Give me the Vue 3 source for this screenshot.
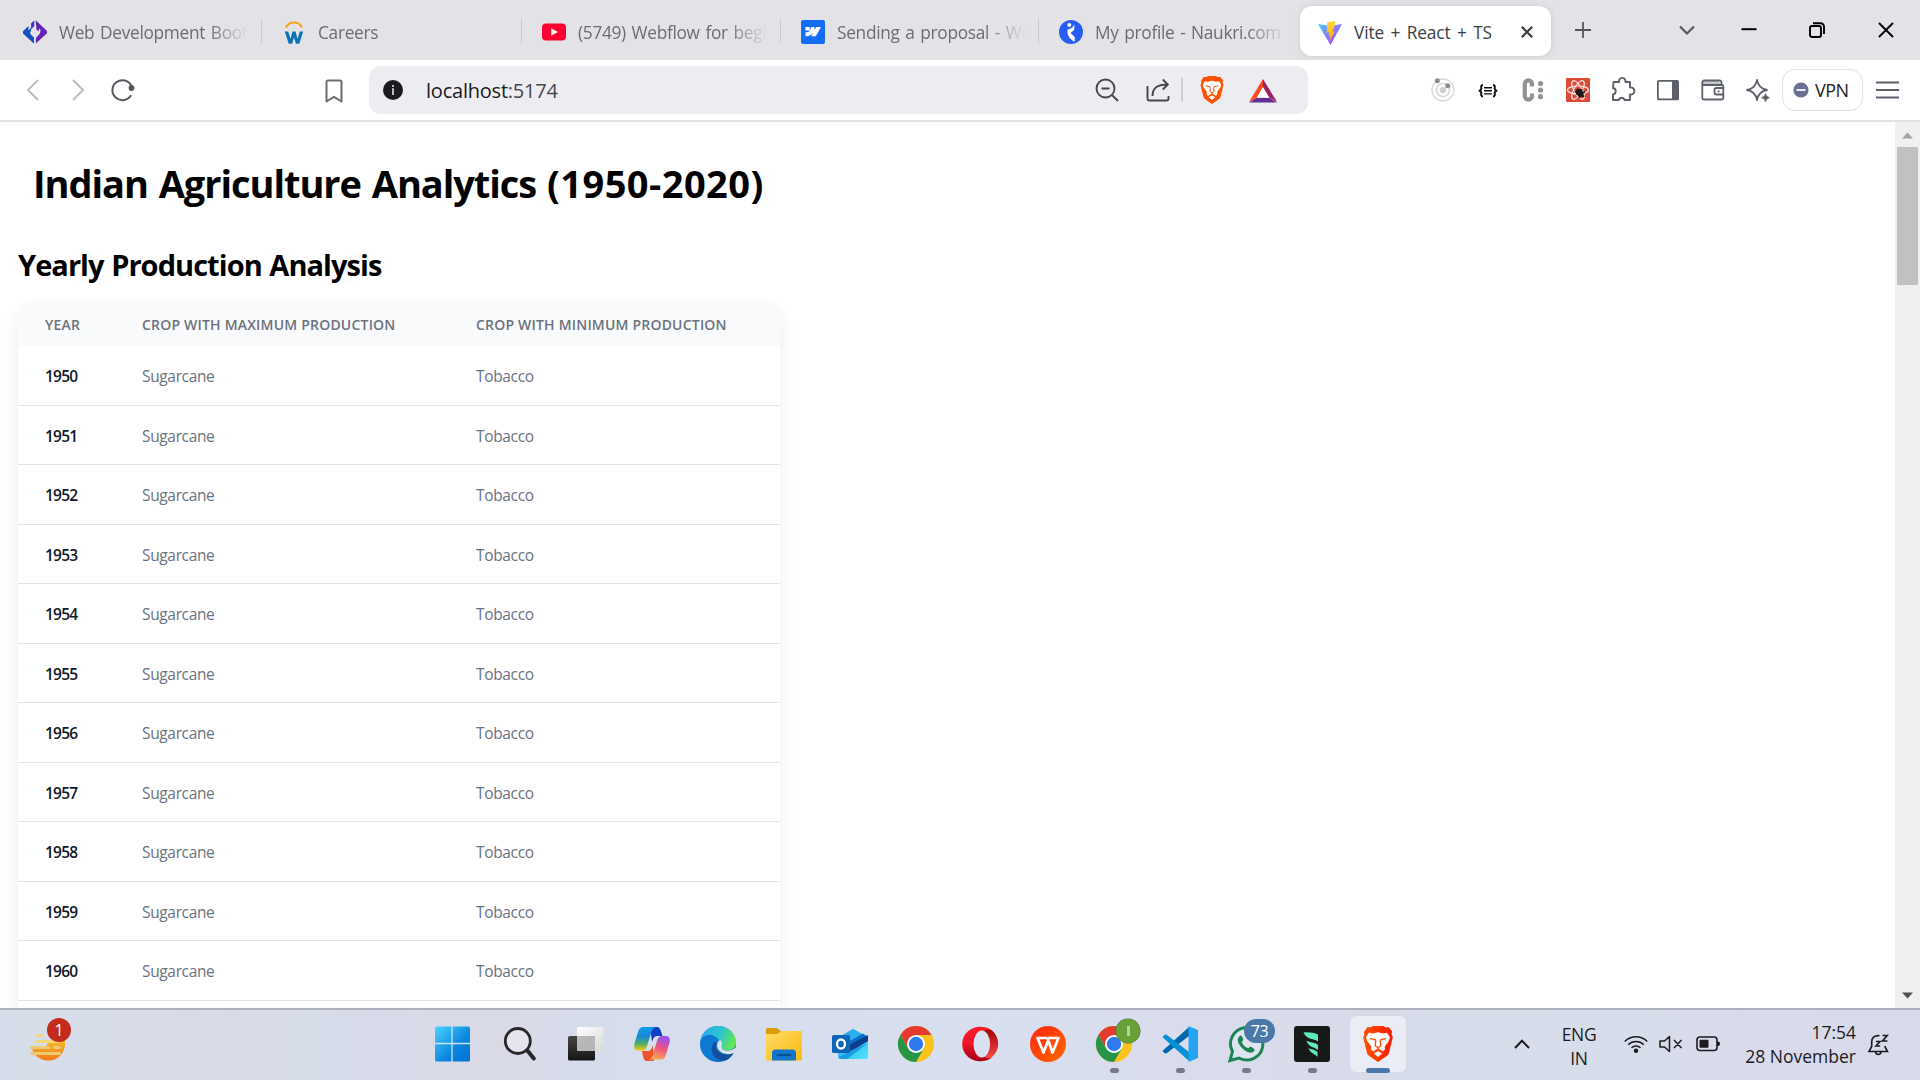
<script setup>
const tabs = [
  { icon: 'code', title: 'Web Development Bootcamp', width: 262 },
  { icon: 'careers', title: 'Careers', width: 260 },
  { icon: 'youtube', title: '(5749) Webflow for beginners', width: 259 },
  { icon: 'webflow', title: 'Sending a proposal - Webflow', width: 258 },
  { icon: 'naukri', title: 'My profile - Naukri.com', width: 261 },
]
const years = Array.from({ length: 11 }, (_, i) => 1950 + i)
const apps = [
  'windows', 'search', 'taskview', 'copilot', 'edge', 'files', 'outlook', 'chrome',
  'opera', 'wps', 'chrome2', 'vscode', 'whatsapp', 'leaf', 'brave',
]
const running = ['chrome2', 'vscode', 'whatsapp', 'leaf']
</script>

<template>
  <div class="screen">
    <svg width="0" height="0" class="defs">
      <defs>
        <linearGradient id="gVite" x1="0" y1="0" x2="1" y2="1"><stop offset="0" stop-color="#41d1ff" /><stop offset="0.9" stop-color="#bd34fe" /></linearGradient>
        <linearGradient id="gBolt" x1="0" y1="0" x2="0" y2="1"><stop offset="0" stop-color="#ffd83d" /><stop offset="1" stop-color="#ffa800" /></linearGradient>
        <linearGradient id="gWin" x1="0" y1="0" x2="1" y2="1"><stop offset="0" stop-color="#4ad4ff" /><stop offset="0.6" stop-color="#0a86de" /><stop offset="1" stop-color="#0070cf" /></linearGradient>
        <linearGradient id="gLion" x1="0" y1="0" x2="1" y2="0"><stop offset="0" stop-color="#ff5500" /><stop offset="1" stop-color="#ff1800" /></linearGradient>
        <linearGradient id="gSun" x1="0" y1="0" x2="0" y2="1"><stop offset="0" stop-color="#f3bd2e" /><stop offset="1" stop-color="#f07a14" /></linearGradient>
        <linearGradient id="gDark" x1="0" y1="0" x2="0" y2="1"><stop offset="0" stop-color="#484644" /><stop offset="1" stop-color="#151515" /></linearGradient>
        <linearGradient id="gLight" x1="0" y1="0" x2="1" y2="1"><stop offset="0" stop-color="#fff" /><stop offset="1" stop-color="#d9d9d9" /></linearGradient>
        <linearGradient id="gCopA" x1="0" y1="0" x2="0" y2="1"><stop offset="0" stop-color="#129bea" /><stop offset="0.4" stop-color="#1689d8" /><stop offset="0.72" stop-color="#4fb064" /><stop offset="1" stop-color="#fccb05" /></linearGradient>
        <linearGradient id="gCopB" x1="0.6" y1="0" x2="0.3" y2="1"><stop offset="0" stop-color="#9a4ff0" /><stop offset="0.5" stop-color="#f0567e" /><stop offset="1" stop-color="#ffaa55" /></linearGradient>
        <linearGradient id="gEdgeA" x1="0" y1="0.2" x2="1" y2="0.5"><stop offset="0" stop-color="#2da9ee" /><stop offset="0.55" stop-color="#2bc5cf" /><stop offset="1" stop-color="#66e750" /></linearGradient>
        <linearGradient id="gEdgeB" x1="0" y1="0" x2="1" y2="1"><stop offset="0" stop-color="#1273c4" /><stop offset="0.5" stop-color="#0c7cd7" /><stop offset="1" stop-color="#0c6bc6" /></linearGradient>
        <linearGradient id="gFile" x1="0" y1="0" x2="1" y2="1"><stop offset="0" stop-color="#ffda68" /><stop offset="1" stop-color="#fcb90d" /></linearGradient>
        <linearGradient id="gOperaA" x1="0" y1="0" x2="0" y2="1"><stop offset="0" stop-color="#ff1b2d" /><stop offset="0.5" stop-color="#ee1426" /><stop offset="1" stop-color="#a40014" /></linearGradient>
        <linearGradient id="gOperaB" x1="0" y1="0" x2="0" y2="1"><stop offset="0" stop-color="#9c0000" /><stop offset="1" stop-color="#ff4b4b" /></linearGradient>
        <linearGradient id="gWps" x1="0" y1="0" x2="1" y2="1"><stop offset="0" stop-color="#ff2410" /><stop offset="1" stop-color="#ff6a00" /></linearGradient>
        <linearGradient id="gOut" x1="0" y1="0" x2="1" y2="1"><stop offset="0" stop-color="#1aa0e2" /><stop offset="1" stop-color="#50e2ff" /></linearGradient>
        <g id="face">
          <path fill="#fff" d="M5 5.200 8 5.800 12 4.800l4 1 3-.6 2.300 3.600-.9 2.800-3.200 4.200.2 2.400-1.600 1.500-3.800-2.400-3.800 2.400-1.600-1.500.2-2.400-3.200-4.200-.9-2.800z" />
          <path fill="#fff" d="M12 19.300 8.800 21.300 12 24l3.200-2.700z" />
          <path fill="none" stroke="#ff4c00" stroke-width="1" d="M5.800 9.800l4 .8.500 1.500-.5 3.200 2.200 1.500 2.200-1.500-.5-3.200.5-1.500 4-.8M12 17v2.500" />
        </g>
        <g id="chromeLogo">
          <circle cx="18" cy="18" r="18" fill="#fcc21b" />
          <path fill="#e33b2e" d="M2.400 9A18 18 0 0 1 33.600 9H18L10.200 22.500z" />
          <path fill="#269547" d="M2.400 9A18 18 0 0 0 18 36l7.800-13.500L18 27l-7.800-4.500z" />
          <circle cx="18" cy="18" r="9" fill="#fff" /><circle cx="18" cy="18" r="7.200" fill="#2f7aee" />
        </g>
      </defs>
    </svg>

    <header class="tabstrip">
      <div v-for="t in tabs" :key="t.icon" class="tab" :class="t.icon" :style="{ width: t.width + 'px' }">
        <svg class="fav" viewBox="0 0 24 24">
          <g v-if="t.icon === 'code'">
            <path fill="#1250c4" d="M0 11.200 5.500 6v4.500L8 7.800v3.400L7 12l.8 2.500 3.200 3v6.200L0 13.600z" />
            <path fill="#3b3ac4" d="M8 3.500 11.300.4V6L8.200 9.500z" />
            <path fill="#6323b6" d="M12.700.2 24 11v2.300L12.900 23.600V18l4-4.500.7-3.500-1.500-1.500-.6 3-2-2z" />
          </g>
          <g v-else-if="t.icon === 'careers'">
            <path d="M4 7.500C7.200.8 16.800.8 20 7.500" fill="none" stroke="#f9a11b" stroke-width="2.200" />
            <path fill="#0e72b6" d="M2.800 11.500h3.400l2.300 7.200 2-7.200h3l2 7.200 2.300-7.200h3.400L17.300 23.700h-3.400L12 17.500l-1.900 6.200H6.700z" />
          </g>
          <g v-else-if="t.icon === 'youtube'"><rect y="3.500" width="24" height="17" rx="4" fill="#ff0033" /><path d="M9.300 8.300v7.400l6.500-3.700z" fill="#fff" /></g>
          <g v-else-if="t.icon === 'webflow'"><rect width="24" height="24" rx="2" fill="#146ef5" /><path fill="#fff" d="M20 7l-5.200 9.300h-4.600l2-3.600C10.500 15 8.200 16.100 4.500 16.300v-3.700c2.200-.1 3.500-.9 4.600-2H4.500V7h4.200v3L10.500 7h3v3L15.300 7z" /></g>
          <g v-else><circle cx="12" cy="12" r="12" fill="#275df5" /><circle cx="10.300" cy="5" r="2" fill="#fff" /><path fill="#fff" d="M15.300 4.500v5.200L11.500 13l4.300 4v4.500c-3.700-1.300-6.600-4.500-7.300-8.500V9.500c2.800-.3 5.500-2 6.800-5z" /></g>
        </svg>
        <span class="title">{{ t.title }}</span>
      </div>
      <div class="tab active">
        <svg class="fav" viewBox="0 0 24 24"><path fill="url(#gVite)" d="M0 3l12 2L24 3 12.500 24z" /><path fill="url(#gBolt)" d="M17.300.1 9.300 1.600 8.600 11.800l2.600-.5-.7 3.700 2-.6-1.200 5.700L17 10.500l-2.600.5 2-5z" /></svg>
        <span class="title">Vite + React + TS</span>
        <svg class="tabx" width="14" height="14" viewBox="0 0 14 14"><path d="M1.800 1.800l10.400 10.400M12.200 1.800 1.800 12.200" stroke="#3b3d44" stroke-width="2.200" /></svg>
      </div>
      <div class="winctl">
        <svg width="16" height="16" viewBox="0 0 16 16"><path d="M8 0v16M0 8h16" stroke="#55575e" stroke-width="1.800" /></svg>
        <svg class="down" width="16" height="16" viewBox="0 0 16 16"><path d="M1 4.500l7 7 7-7" fill="none" stroke="#55585f" stroke-width="2.200" /></svg>
        <svg class="min" width="16" height="16" viewBox="0 0 16 16"><path d="M.5 7.200h15" stroke="#000" stroke-width="2" /></svg>
        <svg class="max" width="16" height="16" viewBox="0 0 16 16"><rect x="1" y="4" width="11" height="11" rx="2" fill="none" stroke="#000" stroke-width="1.900" /><path d="M4 1.200h7.500a3.500 3.500 0 0 1 3.500 3.500V12" fill="none" stroke="#000" stroke-width="1.900" /></svg>
        <svg class="cls" width="16" height="16" viewBox="0 0 16 16"><path d="M1 1l14 14M15 1 1 15" stroke="#000" stroke-width="1.900" /></svg>
      </div>
    </header>

    <div class="toolbar">
      <svg class="back" width="12" height="22" viewBox="0 0 12 22"><path d="M11 1 1 11l10 10" fill="none" stroke="#bcbdc1" stroke-width="2" /></svg>
      <svg class="fwd" width="12" height="22" viewBox="0 0 12 22"><path d="M1 1l10 10L1 21" fill="none" stroke="#bcbdc1" stroke-width="2" /></svg>
      <svg class="reload" width="24" height="24" viewBox="0 0 24 24"><path d="M19.700 17.800A10 10 0 1 1 20.500 8" fill="none" stroke="#55585f" stroke-width="2" stroke-linecap="round" /><circle cx="20.500" cy="10" r="2.900" fill="#55585f" /></svg>
      <svg class="mark" width="18" height="24" viewBox="0 0 18 24"><path d="M3 1.500h12a1.500 1.500 0 0 1 1.500 1.500v19.500L9 17.800 1.500 22.500V3A1.500 1.500 0 0 1 3 1.500z" fill="none" stroke="#6b6d75" stroke-width="2" stroke-linejoin="round" /></svg>
      <div class="omnibox">
        <svg width="20" height="20" viewBox="0 0 20 20"><circle cx="10" cy="10" r="10" fill="#1b1a20" /><path d="M10 5v2M10 8.300V15" stroke="#d9d9df" stroke-width="1.700" /></svg>
        <span class="url">localhost<i>:5174</i></span>
        <svg class="zoomout" width="24" height="24" viewBox="0 0 24 24"><g fill="none" stroke="#45464f" stroke-width="1.900"><circle cx="10.500" cy="10.500" r="9" /><path d="M17 17l6 6M6.500 10.500h8" /></g></svg>
        <svg class="share" width="24" height="24" viewBox="0 0 24 24"><g fill="none" stroke="#45464f" stroke-width="1.900"><path d="M1.500 8v12.500a2 2 0 0 0 2 2h17a2 2 0 0 0 2-2V18" /><path d="M6.500 18C6.500 10 11 6.500 21.500 6.500M16.800 1.500l5 5-5 5" /></g></svg>
        <i class="sep"></i>
        <svg class="lion" width="24" height="28" viewBox="0 0 24 28"><path fill="#ff5000" d="M6.500 1 8 0h8l1.500 1h2.800L23 4.200l-.5 2 1 2.600-3 12.200a4 4 0 0 1-1.700 2.300L12 28l-6.800-4.700A4 4 0 0 1 3.500 21L.5 8.800l1-2-.5-2L3.700 1z" /><use href="#face" /></svg>
        <svg class="bat" width="28" height="25" viewBox="0 0 28 25"><path d="M14 1 0 24l8-4.500 6-10z" fill="#ff4724" /><path d="M14 1l14 23-8-4.500-6-10z" fill="#9e1f63" /><path d="M0 24.500h28l-8-5H8z" fill="#662d91" /><path d="M14 9l6.300 10.800H7.700z" fill="#fff" /></svg>
      </div>
      <div class="exts">
        <svg viewBox="0 0 24 24"><g fill="none" stroke="#d9d9d9"><circle cx="12" cy="12" r="11" stroke-width="1.300" /><circle cx="12" cy="12" r="6.500" stroke-width="1.700" /></g><circle cx="12" cy="12" r="3.200" fill="#cfcfcf" /><circle cx="6.300" cy="2.800" r="2.500" fill="#8b8b8b" /><circle cx="16.700" cy="7.800" r="2.500" fill="#8b8b8b" /></svg>
        <svg viewBox="0 0 24 24"><g fill="none" stroke="#111" stroke-width="2"><path d="M7 7C4.500 7 5.300 9.500 5.300 10.800Q5 12.500 2.800 12.700 5 12.900 5.300 14.500C5.300 16 4.500 18.500 7 18.500M17 7c2.500 0 1.700 2.500 1.700 3.800q.3 1.700 2.500 1.900-2.200.2-2.500 1.800c0 1.500.8 4-1.700 4" /><path d="M8 9.700h8M8 12.800h8M8 15.900h8" stroke-width="1.400" /></g></svg>
        <svg viewBox="0 0 24 24"><path d="M11 8.500V6a3.600 3.600 0 0 0-7.200 0v12A3.600 3.600 0 0 0 11 18v-2.500" fill="none" stroke="#929292" stroke-width="4.200" /><g fill="#929292"><circle cx="19.500" cy="5.500" r="2.600" /><circle cx="19.500" cy="12" r="2.600" /><circle cx="19.500" cy="18.700" r="2.600" /></g></svg>
        <svg viewBox="0 0 24 24"><rect width="24" height="24" rx="1" fill="#dd4a38" /><g fill="none" stroke="#ffe9e6" stroke-width="1.200"><ellipse cx="12" cy="12" rx="10.500" ry="4" /><ellipse cx="12" cy="12" rx="10.500" ry="4" transform="rotate(60 12 12)" /><ellipse cx="12" cy="12" rx="10.500" ry="4" transform="rotate(120 12 12)" /></g><path d="M11 11l7 8M10 16l9-2M13 20l3-9M9 13l5 6" stroke="#191919" stroke-width="1.500" /><ellipse cx="13.800" cy="15" rx="3" ry="4.500" transform="rotate(-40 13.800 15)" fill="#191919" /></svg>
        <svg viewBox="0 0 24 24"><path d="M2.500 4H8a3.300 3.300 0 1 1 6.400 0H19v5.500a3.600 3.600 0 1 1 0 7V22h-5.500a3 3 0 0 0-5.800 0H2v-5.500a3.300 3.300 0 0 0 0-6.500z" fill="none" stroke="#5d606a" stroke-width="1.900" stroke-linejoin="round" /></svg>
        <svg viewBox="0 0 24 24"><rect x="1.900" y="2.900" width="20.200" height="18.500" rx="1" fill="none" stroke="#5d606a" stroke-width="1.800" /><path d="M16 2.500h6v19h-6z" fill="#5d606a" /></svg>
        <svg viewBox="0 0 24 24"><path d="M2 3h15l3.500 3.500H2z" fill="#c4c5c9" /><g fill="none" stroke="#5d606a" stroke-width="1.800"><path d="M20.500 7V4.500a2 2 0 0 0-2-2H3.300a2 2 0 0 0-2 2V20a1.500 1.500 0 0 0 1.500 1.500h18A1.500 1.500 0 0 0 22.300 20V8.500A1.500 1.500 0 0 0 20.800 7H1.500M22 10h-6.500a2 2 0 0 0-2 2v2.500a2 2 0 0 0 2 2H22M16.500 13.300h2" /></g></svg>
        <svg viewBox="0 0 24 24"><path d="M11 1.800Q12.500 10.500 21 12 12.500 13.500 11 22 9.500 13.500 1 12 9.500 10.500 11 1.800z" fill="none" stroke="#5d606a" stroke-width="1.800" stroke-linejoin="round" /><path d="M19.500 15.500q.6 3.600 4.200 4.200-3.600.6-4.200 4.200-.6-3.600-4.200-4.200 3.600-.6 4.200-4.200z" fill="#5d606a" stroke="#5d606a" stroke-width=".6" /></svg>
      </div>
      <div class="vpn">
        <svg width="16" height="16" viewBox="0 0 16 16"><circle cx="8" cy="8" r="7.600" fill="#6b7092" /><path d="M3.500 8h9" stroke="#fff" stroke-width="1.800" /></svg>
        <span>VPN</span>
      </div>
      <svg class="menu" width="23" height="18" viewBox="0 0 23 18"><path d="M0 1.500h23M0 9h23M0 16.500h23" stroke="#5d606a" stroke-width="1.900" /></svg>
    </div>

    <main class="page">
      <section class="content">
        <h1>Indian Agriculture Analytics <span class="range">(1950-2020)</span></h1>
        <h2>Yearly Production Analysis</h2>
        <div class="table">
          <div class="row head"><span>YEAR</span><span>CROP WITH MAXIMUM PRODUCTION</span><span>CROP WITH MINIMUM PRODUCTION</span></div>
          <div v-for="y in years" :key="y" class="row"><b>{{ y }}</b><span>Sugarcane</span><span>Tobacco</span></div>
        </div>
      </section>
      <div class="scroll">
        <svg width="25" height="25" viewBox="0 0 25 25"><path d="M7 16.500l5.500-6 5.500 6z" fill="#a3a3a3" /></svg>
        <div class="thumb"></div>
        <svg class="sdown" width="25" height="25" viewBox="0 0 25 25"><path d="M7 9.500l5.500 6 5.500-6z" fill="#505050" /></svg>
      </div>
    </main>

    <footer class="taskbar">
      <div class="weather">
        <svg width="36" height="30" viewBox="0 0 36 30"><path d="M2 15.500q9 3 14-1 3-7 9-6.500h10a17 17 0 0 1 .3 2.500C35.300 21 28 28.500 18.500 28.500 9 28.500 2.500 22 2 15.500z" fill="url(#gSun)" /><g stroke="#efc873" stroke-width="3" stroke-linecap="round"><path d="M7.500 3.500h5M7.500 9.500h20" stroke="#f3d878" /><path d="M1.500 15.500h17M24.500 15.500h5M1.500 21.500h28" /></g></svg>
        <span class="one">1</span>
      </div>
      <nav class="apps">
        <div v-for="a in apps" :key="a" class="app" :class="[a, { on: a === 'brave' }]">
          <svg width="36" height="36" viewBox="0 0 36 36">
            <g v-if="a === 'windows'" transform="translate(-1.500 0)"><rect x=".5" y=".5" width="35" height="35" rx="1.500" fill="url(#gWin)" /><path d="M17.500 0v36M0 17.500h36" stroke="#c9e2f4" stroke-width="1.300" /></g>
            <g v-else-if="a === 'search'" stroke="#282828" transform="translate(1.800 0)"><circle cx="14" cy="15" r="12.500" fill="#e6e4ef" stroke-width="2.800" /><path d="M24 25l6 7.500" stroke-width="4" stroke-linecap="round" /></g>
            <g v-else-if="a === 'taskview'"><rect x="0" y="10" width="27" height="24.500" rx="1.500" fill="url(#gDark)" /><rect x="9" y="1" width="26.500" height="24" rx="1" fill="url(#gLight)" /><path d="M9 10h18v15H9z" fill="#a5a5a5" opacity=".75" /></g>
            <g v-else-if="a === 'copilot'">
              <path d="M16 1h6.500c3 0 3.800 2 4.800 5.200L28.500 10H24c-4 0-4.500 2-6 6z" fill="#133fc8" />
              <path d="M20 35h-6.500c-3 0-3.800-2-4.500-5L8 25h5c4 0 4.500-2 6-6z" fill="#f0532c" />
              <path d="M9.500 1H22c-2.500 0-4 3-5 6.500L13 20c-1 3-2 4.500-5 4.500H4C0 24.500-.5 20.500.8 16.500L4.200 5.500C5.200 2.500 6.500 1 9.500 1z" fill="url(#gCopA)" />
              <path d="M26.500 33.500H14c2.500 0 4-2 5-5.500l4-13c1-3 2-5 5-5h4c4 0 4.500 4 3.200 8L31.800 29c-1 3-2.300 4.500-5.300 4.500z" fill="url(#gCopB)" />
            </g>
            <g v-else-if="a === 'edge'">
              <circle cx="18" cy="18" r="18" fill="url(#gEdgeB)" />
              <path d="M.3 16C2.500 9 9 7.500 14 10c5 2.500 7 6 7.500 9.500.5 3.500 1.500 5 5 5 5 0 9.500-2.500 9.500-8C35.800 8 29 0 18 0 8 0 1 7 .3 16z" fill="url(#gEdgeA)" />
              <path d="M14 16c-3 4-3.500 9 0 14 4 5 11 6 15 2.500 3-2.200 4.500-4.800 4.500-6-4.500 3.500-13 2.500-16-2-2-3-1.500-6-.5-8z" fill="#13509b" />
              <path d="M20 14c3.500 2 1 6.500 2 8.300 1.500 3.500 9 3.500 15-1.500V27l-4 .3c-5 2-12 .5-15-4-2-4-.5-8 2-9.300z" fill="#d9dfee" />
            </g>
            <g v-else-if="a === 'files'"><path d="M0 3.500A1.500 1.500 0 0 1 1.500 2H11l4 3.500V9H0z" fill="#dc9c09" /><path d="M0 8h11l5-3h20v28.500a1 1 0 0 1-1 1H1a1 1 0 0 1-1-1z" fill="url(#gFile)" /><path d="M6 34.500V27q0-3.500 3.500-3.500h17Q30 23.500 30 27v7.500z" fill="#1277ca" /><path d="M11.500 29h13" stroke="#074f91" stroke-width="1.800" stroke-linecap="round" /></g>
            <g v-else-if="a === 'outlook'"><path d="M7 11 21 3l15 8v20a2 2 0 0 1-2 2H9a3 3 0 0 1-3-3z" fill="url(#gOut)" /><path d="M13 8l8-5 10 5.500L18 16z" fill="#2cb0ed" /><path d="M18 15l13-7.500 5 3.500-18 12z" fill="#0f6fc8" /><path d="M18 18.500 36 9v6L18 26z" fill="#0b3f8d" /><path d="M36 17 15 33H9a3 3 0 0 1-2.500-1.500L18 25z" fill="#169ee2" /><rect y="9" width="18" height="18" rx="1.500" fill="#0f66b7" /><ellipse cx="9" cy="18" rx="4" ry="4.500" fill="none" stroke="#fff" stroke-width="2.300" /></g>
            <g v-else-if="a === 'chrome' || a === 'chrome2'"><use href="#chromeLogo" /></g>
            <g v-else-if="a === 'opera'"><path fill="url(#gOperaB)" d="M12 6C17 .5 24 1.500 28 4.500A17.200 17.200 0 0 1 28 31c-4 3.500-11 4-16-1.500h5c6 0 8-6 8-11.500S23 6 17 6z" /><path fill="url(#gOperaA)" d="M18 1a17.200 17.200 0 1 0 0 34c4 0 7.500-1.300 10.500-4-6 3.800-14.500-1.500-14.500-13S22.500 1 28.500 5A16 16 0 0 0 18 1z" /><ellipse cx="17.800" cy="18" rx="8.300" ry="13.500" fill="#d9e0ef" /></g>
            <g v-else-if="a === 'wps'"><circle cx="18" cy="18" r="18" fill="url(#gWps)" /><path d="M17.500 12H7.500l6 14.500L19 12h9.500l-6 14.500-5-14.500" fill="none" stroke="#fff" stroke-width="2.700" stroke-linejoin="round" /></g>
            <g v-else-if="a === 'vscode'"><path d="M2 23.500 27 1v9L5 27q-1.500 1-3-.5-2.500-1.500 0-3z" fill="#0069ad" /><path d="M2 12.500 27 35v-9L5 9Q3.500 8 2 9.500q-2.500 1.500 0 3z" fill="#0590d8" /><path d="M26.500 0 36 4v28l-9.500 4z" fill="#24a4f1" /></g>
            <g v-else-if="a === 'whatsapp'"><path d="M2 34.500l2.500-9A16.200 16.200 0 1 1 11 32z" fill="#dfe5f0" stroke="#1b8653" stroke-width="3" /><path d="M12.500 9.500C8 12 9.500 17.500 14 22s10 6.500 12.500 2.500c.5-1-.5-2-3-3.500-2-1.200-2.500 1-3.500 1-2 0-6-4-6-6 0-1 2-1.500 1-3.500-1-2.300-1.500-3.500-2.500-3z" fill="#1b8653" /></g>
            <g v-else-if="a === 'leaf'"><rect width="36" height="36" rx="3" fill="#171a19" /><g fill="#5de8c0"><path d="M9.500 6.500C14 6 20 6.500 24 8.500v6.800c-4-3-11-1-14.500-8.800z" /><path d="M12.300 14.800c3.500 1.500 8.500 1.500 11.700 4V24c-3.500-3-9-2-11.700-9.200z" /><path d="M14.500 22.300c3 1 6.500 1.200 9 3.700v5c-2.500-3.500-6.500-2.500-9-8.700z" /></g></g>
            <g v-else transform="translate(2.500 0) scale(1.29)"><path fill="url(#gLion)" d="M6.500 1 8 0h8l1.500 1h2.800L23 4.200l-.5 2 1 2.600-3 12.200a4 4 0 0 1-1.700 2.300L12 28l-6.800-4.700A4 4 0 0 1 3.500 21L.5 8.800l1-2-.5-2L3.700 1z" /><use href="#face" /></g>
          </svg>
          <span v-if="a === 'chrome2'" class="badge green"><i></i></span>
          <span v-if="a === 'whatsapp'" class="badge blue">73</span>
          <i v-if="running.includes(a)" class="dot"></i>
          <i v-if="a === 'brave'" class="dot wide"></i>
        </div>
      </nav>
      <div class="tray">
        <svg class="up" width="16" height="10" viewBox="0 0 16 10"><path d="M1 9l7-7.200L15 9" fill="none" stroke="#1b1b1f" stroke-width="2" /></svg>
        <div class="lang"><span>ENG</span><span>IN</span></div>
        <svg class="wifi" width="24" height="18" viewBox="0 0 24 18"><g fill="none" stroke="#1b1b1f" stroke-width="1.500"><path d="M.8 6.500a15.500 15.500 0 0 1 22.400 0M4.200 9.700a11 11 0 0 1 15.600 0M7.500 12.800a6.500 6.500 0 0 1 9 0" /></g><circle cx="12" cy="15.700" r="2.200" fill="#1b1b1f" /></svg>
        <svg class="snd" width="24" height="18" viewBox="0 0 24 18"><path d="M1 6h4.500L10.500 1.500v15L5.500 12H1zM15 5l7.500 8M22.500 5 15 13" fill="none" stroke="#1b1b1f" stroke-width="1.500" stroke-linejoin="round" /></svg>
        <svg class="batt" width="25" height="16" viewBox="0 0 25 16"><rect x="1" y="1" width="20" height="13.500" rx="3" fill="none" stroke="#1b1b1f" stroke-width="1.600" /><rect x="3.500" y="3.800" width="9" height="8" rx="1" fill="#1b1b1f" /><path d="M21 5.500h1.500q1.500.3 1.500 2.200t-1.500 2.300H21z" fill="#1b1b1f" /></svg>
        <div class="clock"><span class="time">17:54</span><span class="date">28 November</span></div>
        <svg class="bell" width="22" height="22" viewBox="0 0 22 22"><path d="M11.500 1.700C6 1.300 3.700 4 3.700 8v4.500L1 17.500h18.500l-2.300-4.300V12M7.500 18.200c.5 3 5 3 5.500 0" fill="none" stroke="#1b1b1f" stroke-width="1.600" /><path d="M8 7.500h4L8 12h4.200M14.500 1.500h4.700L14.500 7h4.900" fill="none" stroke="#1b1b1f" stroke-width="1.600" /></svg>
      </div>
    </footer>
  </div>
</template>

<style>
body { margin: 0; overflow: hidden; }
</style>

<style scoped>
.screen { width: 1920px; height: 1080px; display: flex; flex-direction: column; overflow: hidden; background: #fff; font-family: "Open Sans", "Noto Sans", sans-serif; color: #000; }
.defs { position: absolute; }
svg { display: block; flex: none; overflow: visible; }
i { font-style: normal; }
.screen * { box-sizing: border-box; }

.tabstrip { flex: none; height: 60px; background: #e3e2e7; display: flex; align-items: flex-start; }
.tab { flex: none; height: 60px; padding: 2px 14px 0 20px; display: flex; align-items: center; position: relative; color: #6b6d73; }
.tab:first-child { padding-left: 23px; }
.tab::after { content: ""; position: absolute; right: 0; top: 19px; width: 1.5px; height: 24px; background: #c9c9cf; }
.tab.naukri::after, .tab.active::after { display: none; }
.fav { width: 24px; height: 24px; margin-top: 2px; }
.title { margin: 3px 0 0 12px; flex: 1; overflow: hidden; white-space: nowrap; font-size: 17.3px; line-height: 30px; letter-spacing: -0.3px; word-spacing: 1.5px; -webkit-mask-image: linear-gradient(to right, #000 calc(100% - 40px), transparent); mask-image: linear-gradient(to right, #000 calc(100% - 40px), transparent); }
.tab.active { width: 251px; height: 50px; margin-top: 6px; padding: 0 18px; background: #fff; border-radius: 12px; box-shadow: 0 0 6px rgba(0, 0, 0, 0.1); color: #3d3e44; }
.active .fav { margin-top: 3px; }
.active .title { mask-image: none; -webkit-mask-image: none; letter-spacing: -0.1px; word-spacing: 2px; }
.tabx { margin: 2px -1px 0 0; }
.winctl { display: flex; height: 60px; align-items: center; margin-left: 24px; }
.winctl svg { margin-right: 88px; }
.winctl .down { margin-right: 45px; }
.winctl .min { margin: 0 52px 0 1px; }
.winctl .max, .winctl .cls { margin-right: 53px; }

.toolbar { flex: none; height: 62px; border-bottom: 2px solid #e3e2e7; display: flex; align-items: center; }
.back { margin-left: 27px; }
.fwd { margin-left: 33px; }
.reload { margin-left: 27px; margin-top: -1px; }
.mark { margin-left: 190px; margin-top: 1px; }
.omnibox { width: 939px; height: 48px; margin-left: 26px; background: #edecf1; border-radius: 12px; display: flex; align-items: center; padding-left: 14px; flex: none; }
.url { margin: 2px 0 0 23px; font-size: 20px; line-height: 28px; width: 669px; color: #1b1b20; letter-spacing: -0.22px; }
.url i { color: #45464f; }
.share { margin-left: 27px; }
.sep { width: 2px; height: 24px; background: #cfced6; margin-left: 11px; }
.lion { margin-left: 17px; }
.bat { margin-left: 25px; }
.exts { display: flex; margin-left: 112px; }
.exts svg { width: 24px; height: 24px; margin: 0 10.5px; }
.vpn { width: 81px; height: 42px; margin-left: 2px; border: 1.5px solid #dfdfe5; border-radius: 13px; display: flex; align-items: center; padding-left: 10px; font-size: 18px; flex: none; color: #1b1b20; }
.vpn span { margin-left: 6px; letter-spacing: -0.5px; }
.menu { margin-left: 13px; }

.page { flex: 1; min-height: 0; display: flex; overflow: hidden; }
.content { flex: 1; overflow: hidden; padding-left: 18px; }
h1 { margin: 34px 0 0 15px; font-size: 38px; line-height: 54px; font-weight: 700; white-space: nowrap; letter-spacing: -1.05px; word-spacing: 2px; }
.range { letter-spacing: 0.45px; }
h2 { margin: 35px 0 0 0; font-size: 29px; line-height: 40px; font-weight: 700; white-space: nowrap; letter-spacing: -0.95px; word-spacing: 1px; }
.table { width: 762px; height: 900px; margin-top: 16px; border-radius: 12px; box-shadow: 0 10px 20px -2px rgba(0, 0, 0, 0.09); background: #fff; overflow: hidden; }
.row { display: grid; grid-template-columns: 97px 334px 331px; height: 59.5px; align-items: center; border-bottom: 1px solid #e2e4e7; font-size: 15.5px; letter-spacing: -0.35px; color: #6b7280; padding-top: 2px; }
.row > * { padding-left: 27px; white-space: nowrap; }
.row b { font-weight: 600; color: #111827; letter-spacing: -0.75px; }
.row.head { height: 45px; border: 0; background: #f9fafb; font-size: 14px; font-weight: 600; letter-spacing: 0.2px; }
.scroll { width: 25px; background: #f0f0f0; display: flex; flex-direction: column; align-items: center; }
.thumb { width: 21px; height: 138px; background: #c1c1c1; }
.sdown { margin-top: auto; }

.taskbar { flex: none; height: 72px; border-top: 2px solid #aeb1bb; display: flex; position: relative; background: linear-gradient(90deg, #d5deea 0, #dadae8 11%, #d7dce9 16%, #d7dbe9 20%, #dadae7 26%, #d6ddec 32%, #d8dfee 52%, #d9dcec 62%, #d8dcea 70%, #d7ddea 85%, #d9daeb 92%, #d8daea 100%); }
.weather { width: 421px; padding: 22px 0 0 30px; position: relative; flex: none; }
.one { position: absolute; left: 47px; top: 8px; width: 24px; height: 24px; border-radius: 50%; background: #c42b1c; color: #fff; font-size: 16px; line-height: 24px; text-align: center; }
.apps { display: flex; flex: none; }
.app { width: 66px; height: 70px; padding-top: 16px; display: flex; justify-content: center; position: relative; }
.app > svg { position: relative; }
.on::before { content: ""; position: absolute; left: 5px; top: 6px; width: 56px; height: 56px; border-radius: 6px; background: #ebedf6; box-shadow: 0 0 0 1px #d5d7e3; }
.dot { position: absolute; left: 28.5px; top: 58px; width: 9px; height: 5px; border-radius: 3px; background: #797b84; }
.dot.wide { left: 21px; width: 24px; background: #4a79a9; }
.badge { position: absolute; top: 9px; height: 24px; border-radius: 12px; color: #fff; display: flex; align-items: center; justify-content: center; }
.green { left: 35px; width: 24px; background: #69a038; box-shadow: 0 0 0 0.5px #496f2b; }
.green i { width: 3px; height: 10px; background: #b9d39c; }
.blue { left: 31px; width: 31px; background: #4a79a9; font-size: 16px; letter-spacing: -0.5px; }
.tray { display: flex; flex: 1; color: #1b1b1f; font-size: 17.5px; line-height: 24px; padding-left: 103px; }
.tray > svg { margin-top: 25px; }
.tray .up { margin-top: 29px; }
.lang, .clock { display: flex; flex-direction: column; }
.lang { width: 60px; margin-left: 19px; margin-top: 12px; align-items: center; letter-spacing: -0.4px; }
.wifi { margin-left: 15px; }
.snd { margin-left: 11px; }
.tray .batt { margin-left: 13px; margin-top: 26px; }
.clock { width: 135px; align-items: flex-end; margin-top: 10px; white-space: nowrap; }
.tray .bell { margin-left: 12px; margin-top: 24px; }
</style>
